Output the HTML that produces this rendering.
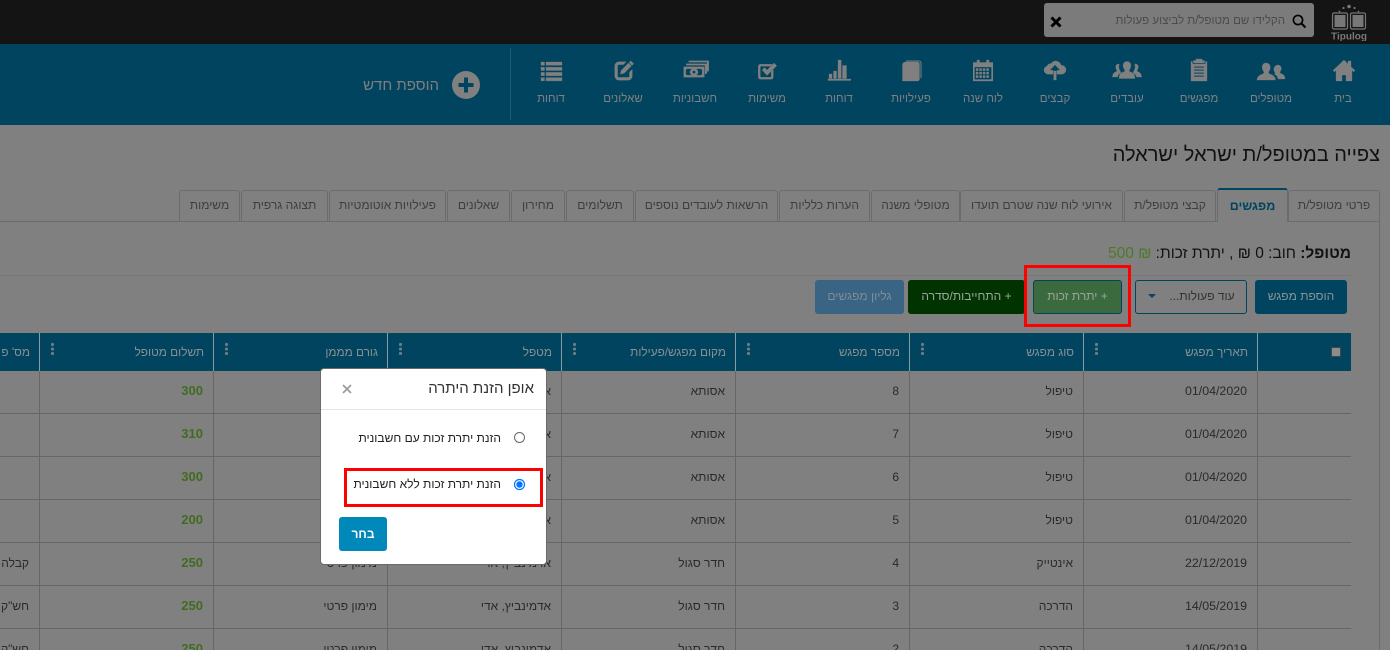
<!DOCTYPE html>
<html lang="he"><head><meta charset="utf-8"><title>Tipulog</title>
<style>
*{box-sizing:border-box}
html,body{margin:0;padding:0;width:1390px;height:650px;overflow:hidden;background:#7f807f;font-family:"Liberation Sans",sans-serif;font-size:12px;color:#2a2a2a}
#w{position:relative;width:1390px;height:650px;overflow:hidden}
.a{position:absolute}
.t{position:absolute;direction:rtl;white-space:nowrap;text-align:right}
.n{position:absolute;top:92px;width:72px;text-align:center;direction:rtl;color:#808080;font-size:11.5px;line-height:15px;white-space:nowrap}
.i{position:absolute;top:58px;fill:#808080;stroke:#808080;stroke-width:.3}
.i.b{stroke-width:.8}
.tab{position:absolute;top:190px;height:32px;border:1px solid #696d70;border-bottom:0;border-radius:3px 3px 0 0;color:#3d3f3f;text-align:center;line-height:29px;direction:rtl;white-space:nowrap;font-size:12px}
.btn{position:absolute;top:280px;height:34px;border-radius:3px;line-height:33px;text-align:center;direction:rtl;font-size:12px;white-space:nowrap}
.hc{position:absolute;top:333px;height:38px;background:#00445f;border-left:1px solid #8b9ba3;color:#8a8f90;direction:rtl;text-align:right;line-height:39px;padding-right:9px;white-space:nowrap;font-size:11.8px}
.dots{position:absolute;top:343px;width:3px;height:13px;background:radial-gradient(circle at 1.5px 1.5px,#6a7c85 1.5px,transparent 1.6px) 0 0/3px 4.5px repeat-y}
.c{position:absolute;height:43px;line-height:41px;direction:rtl;text-align:right;padding-right:10px;border-left:1px solid #666;border-bottom:1px solid #666;white-space:nowrap;overflow:hidden;font-size:12px;color:#2a2a2a}
.d{font-size:12.4px}
.g{color:#426b22;font-weight:bold;font-size:13px;line-height:39px}
</style></head><body><div id="w">

<!-- top bar -->
<div class="a" style="left:0;top:0;width:1390px;height:44px;background:#141414"></div>
<div class="a" style="left:1044px;top:3px;width:270px;height:34px;background:#7b7b7b;border-radius:3px"></div>
<div class="t" style="right:105px;top:13px;font-size:11.5px;color:#4b4b4b;line-height:16px">הקלידו שם מטופל/ת לביצוע פעולות</div>
<svg class="a" style="left:1292px;top:14px" width="15" height="15" viewBox="0 0 15 15"><circle cx="6" cy="6" r="4.6" fill="none" stroke="#000" stroke-width="1.6"/><path d="M9.5 9.5L13.5 13.5" stroke="#000" stroke-width="2"/></svg>
<svg class="a" style="left:1050px;top:16px" width="12" height="12" viewBox="0 0 12 12"><path d="M1.5 1.5L10.5 10.5M10.5 1.5L1.5 10.5" stroke="#000" stroke-width="3"/></svg>
<svg class="a" style="left:1329px;top:3px" width="40" height="38" viewBox="0 0 40 38">
<g fill="none" stroke="#777" stroke-width="1.2"><rect x="3.500" y="10" width="15" height="16" rx="1.5"/><rect x="21.500" y="10" width="15" height="16" rx="1.5"/></g>
<rect x="5.500" y="12" width="11" height="12" fill="#777"/><rect x="23.500" y="12" width="11" height="12" fill="#777"/>
<g fill="#777"><circle cx="20" cy="3.500" r="1.8"/><circle cx="14.500" cy="5" r="1.1"/><circle cx="25.500" cy="5" r="1.1"/><circle cx="10.500" cy="8.500" r=".9"/><circle cx="29.500" cy="8.500" r=".9"/></g>
<text x="20" y="36.500" text-anchor="middle" font-family="Liberation Sans" font-weight="bold" font-size="10" fill="#777">Tipulog</text></svg>

<!-- nav -->
<div class="a" style="left:0;top:44px;width:1390px;height:81px;background:#00445f"></div>
<div class="a" style="left:510px;top:48px;width:1px;height:72px;background:#215a73"></div>

<svg class="i" style="left:1332px" width="24" height="24" viewBox="0 0 24 24"><path d="M12 2L1 12.500l1.400 1.300L4 12.400V23h6v-6h4v6h6V12.400l1.600 1.400 1.400-1.300L19 8.700V3h-3v3z"/></svg>
<svg class="i" style="left:1256px" width="30" height="24" viewBox="0 0 30 24"><path d="M10 5c3.200 0 4.600 2.500 4.200 5.200-.3 1.700-1 3-1.800 3.800 0 1 .5 1.600 2 2.200 2.500 1 4.800 2 5.100 5.800H1c.3-3.800 2.600-4.800 5.100-5.800 1.500-.6 2-1.200 2-2.200-.8-.8-1.500-2.100-1.800-3.800C5.900 7.500 6.800 5 10 5z"/><path d="M22 7c2.400 0 3.500 2 3.200 4-.2 1.400-.8 2.400-1.400 3 0 .8.400 1.200 1.600 1.700 1.900.8 3.500 1.600 3.600 5.300h-7c-.3-2.500-1.600-4-3.800-5 .6-.3 1-.7 1-1.200-.6-.6-1.100-1.600-1.300-2.800C17.600 9 19.600 7 22 7z"/></svg>
<svg class="i" style="left:1189px" width="20" height="24" viewBox="0 0 20 24"><path fill-rule="evenodd" d="M7 2.500V1h6v1.500h2.500V5h-11V2.500zM2 3.500h1.500V6h13V3.500H18V23H2zM5 8.500v1.200h10V8.500zm0 3v1.200h10v-1.200zm0 3v1.200h10v-1.200zm0 3v1.200h10v-1.200z"/></svg>
<svg class="i" style="left:1112px" width="30" height="24" viewBox="0 0 30 24"><path d="M15 3.500c3 0 4.200 2.300 3.800 4.800-.3 1.800-1 3.100-1.700 3.900 0 1 .6 1.500 2 2 2.200.9 3.600 1.800 3.900 6.300H7c.3-4.500 1.700-5.400 3.900-6.300 1.400-.5 2-1 2-2-.7-.8-1.400-2.100-1.700-3.900C10.800 5.800 12 3.500 15 3.500z"/><path d="M6.500 6c-2.100 0-3 1.800-2.700 3.700.2 1.200.7 2.200 1.200 2.700 0 .7-.4 1.100-1.400 1.500C2 14.700.8 15.500.4 19H5.500c.4-2 1.600-3.300 3.700-4.300-.5-.4-.8-.8-.8-1.400-.8-1-1.300-2.300-1.500-3.900-.1-1.200 0-2.300.4-3.300C7.300 6.100 6.900 6 6.500 6zM23.500 6c2.100 0 3 1.800 2.700 3.700-.2 1.200-.7 2.200-1.200 2.700 0 .7.400 1.100 1.400 1.500 1.600.8 2.800 1.600 3.200 5.100h-5.100c-.4-2-1.600-3.300-3.700-4.300.5-.4.800-.8.800-1.400.8-1 1.300-2.300 1.500-3.900.1-1.200 0-2.300-.4-3.300.4 0 .4-.1.800-.1z"/></svg>
<svg class="i" style="left:1043px" width="24" height="24" viewBox="0 0 24 24"><path d="M12.500 3c2.800 0 5 1.800 5.600 4.300C20.900 7.400 23 9.300 23 11.800c0 2.500-2 4.400-4.500 4.400H14v-4h3.200L12 6.800 6.800 12.200H10v4H5.500C3 16.200 1 14.300 1 12c0-2 1.400-3.600 3.200-4 .5-1.800 2.300-2.800 3.900-2.300C9.100 4 10.700 3 12.500 3z"/><rect x="10.700" y="13" width="2.600" height="9"/></svg>
<svg class="i" style="left:973px" width="20" height="24" viewBox="0 0 20 24"><path fill-rule="evenodd" d="M4 2h2.500v2.500h7V2H16v2.500h4V23H0V4.500h4zM1.500 9v12.500h17V9zM3 10.500h2.200v2.200H3zm3.500 0h2.200v2.200H6.500zm3.500 0h2.200v2.200H10zm3.500 0h2.200v2.200h-2.200zM3 14h2.200v2.200H3zm3.500 0h2.200v2.200H6.500zm3.500 0h2.200v2.200H10zm3.500 0h2.200v2.200h-2.200zM3 17.500h2.200v2.200H3zm3.500 0h2.200v2.200H6.500zm3.500 0h2.200v2.200H10zm3.500 0h2.200v2.200h-2.200z"/></svg>
<svg class="i" style="left:901px" width="21" height="24" viewBox="0 0 21 24"><path d="M4.500 4h12a2 2 0 0 1 2 2v15a2 2 0 0 1-2 2H1.500V7c0-1.800 1.200-3 3-3z"/><path d="M5 3h13a2.200 2.200 0 0 1 2 2.200V20" fill="none" stroke-width="1"/></svg>
<svg class="i" style="left:827px" width="24" height="24" viewBox="0 0 24 24"><path d="M1 22.500h23V21H1zM2 16h3v4.500H2zM6.500 13h3v7.500h-3zM11 2h3.200v18.500H11zM15.500 7.500h4v13h-4z"/></svg>
<svg class="i b" style="left:757px" width="22" height="24" viewBox="0 0 22 24"><path d="M14.500 18.500a1 1 0 0 1-1 1H4a1 1 0 0 1-1-1V9a1 1 0 0 1 1-1h9l1.500-1.500H3.500A2 2 0 0 0 1.500 8.500V19a2 2 0 0 0 2 2h10.500a2 2 0 0 0 2-2v-6.500l-1.500 1.500z"/><path d="M5.500 12l2-2 2.500 2.500 7-7 2.300 2.300L10 17z"/></svg>
<svg class="i b" style="left:683px" width="26" height="24" viewBox="0 0 26 24"><path fill-rule="evenodd" d="M1 9h20v10H1zM3.500 10.500A2 2 0 0 1 2.500 12v4.200a2 2 0 0 1 1 1.300h15a2 2 0 0 1 1-1.300V12a2 2 0 0 1-1-1.500zM11 10.800c2.200 0 3.800 1.500 3.800 3.300S13.200 17.300 11 17.300s-3.800-1.400-3.800-3.200 1.600-3.300 3.800-3.300zm0 1.500a1.800 1.800 0 1 0 0 3.600 1.800 1.800 0 0 0 0-3.600z"/><path d="M3.500 7V6h20v9.500h-1.200V7zM6 4V3h19.500v10h-1.200V4z"/></svg>
<svg class="i b" style="left:613px" width="22" height="24" viewBox="0 0 22 24"><path d="M12.500 4H6a4 4 0 0 0-4 4v10a4 4 0 0 0 4 4h9a4 4 0 0 0 4-4v-6l-2.300 2.300V18a1.700 1.700 0 0 1-1.700 1.700H6A1.700 1.700 0 0 1 4.300 18V8A1.700 1.700 0 0 1 6 6.300h4.200z"/><path d="M8.500 12.500l7-7 2.500 2.500-7 7-3.300.8zM16.500 4.500l1.300-1.300 2.500 2.500-1.300 1.300z"/></svg>
<svg class="i" style="left:540px" width="23" height="24" viewBox="0 0 23 24"><path d="M1 4h3.500v3.300H1zM6 4h16v3.300H6zM1 9.200h3.500v3.300H1zM6 9.200h16v3.300H6zM1 14.400h3.500v3.300H1zM6 14.400h16v3.300H6zM1 19.600h3.500v3.300H1zM6 19.600h16v3.300H6z"/></svg>

<div class="n" style="left:1307px">בית</div>
<div class="n" style="left:1235px">מטופלים</div>
<div class="n" style="left:1163px">מפגשים</div>
<div class="n" style="left:1091px">עובדים</div>
<div class="n" style="left:1019px">קבצים</div>
<div class="n" style="left:947px">לוח שנה</div>
<div class="n" style="left:875px">פעילויות</div>
<div class="n" style="left:803px">דוחות</div>
<div class="n" style="left:731px">משימות</div>
<div class="n" style="left:659px">חשבוניות</div>
<div class="n" style="left:587px">שאלונים</div>
<div class="n" style="left:515px">דוחות</div>

<svg class="a" style="left:452px;top:71px" width="28" height="28" viewBox="0 0 28 28"><circle cx="14" cy="14" r="14" fill="#808080"/><path d="M14 6.500v15M6.500 14h15" stroke="#00445f" stroke-width="4"/></svg>
<div class="t" style="right:951px;top:77px;color:#808080;font-size:15px;line-height:18px">הוספת חדש</div>

<!-- title -->
<div class="t" style="right:10px;top:142px;font-size:20px;line-height:26px;color:#111">צפייה במטופל/ת ישראל ישראלה</div>

<!-- tabs -->
<div class="a" style="left:0;top:221px;width:1380px;height:1px;background:#696d70"></div>
<div class="a" style="left:1379px;top:221px;width:1px;height:429px;background:#696d70"></div>
<div class="tab" style="left:1288px;width:92px">פרטי מטופל/ת</div>
<div class="tab" style="left:1217px;width:71px;top:188px;height:34px;line-height:33px;border-top:2px solid #00445f;font-weight:bold;font-size:12.5px;color:#00445f;background:#7f807f">מפגשים</div>
<div class="tab" style="left:1124px;width:92px">קבצי מטופל/ת</div>
<div class="tab" style="left:960px;width:163px">אירועי לוח שנה שטרם תועדו</div>
<div class="tab" style="left:871px;width:89px">מטופלי משנה</div>
<div class="tab" style="left:779px;width:91px">הערות כלליות</div>
<div class="tab" style="left:635px;width:143px">הרשאות לעובדים נוספים</div>
<div class="tab" style="left:566px;width:68px">תשלומים</div>
<div class="tab" style="left:511px;width:54px">מחירון</div>
<div class="tab" style="left:447px;width:63px">שאלונים</div>
<div class="tab" style="left:329px;width:117px">פעילויות אוטומטיות</div>
<div class="tab" style="left:241px;width:87px">תצוגה גרפית</div>
<div class="tab" style="left:179px;width:61px">משימות</div>

<!-- summary -->
<div class="t" style="right:39px;top:244px;font-size:15.5px;line-height:20px;color:#111"><b>מטופל:</b> חוב: 0 ₪ , יתרת זכות: <span style="color:#4d7a27">₪ 500</span></div>
<div class="a" style="left:0;top:275px;width:1351px;height:1px;background:#767776"></div>

<!-- buttons -->
<div class="btn" style="left:1255px;width:92px;background:#00445f;color:#8a9296">הוספת מפגש</div>
<div class="btn" style="left:1135px;width:112px;border:1px solid #00445f;color:#2f3436;line-height:31px;padding-left:22px">עוד פעולות...</div>
<div class="a" style="left:1148px;top:294px;width:0;height:0;border:4px solid transparent;border-top:4px solid #00445f"></div>
<div class="btn" style="left:1033px;width:89px;background:#3a6a3d;border:1px solid #00445f;color:#9aa69a;line-height:31px">+ יתרת זכות</div>
<div class="btn" style="left:908px;width:117px;background:#003300;color:#9aa69a">+ התחייבות/סדרה</div>
<div class="btn" style="left:815px;width:89px;background:#3a6483;color:#808c96">גליון מפגשים</div>
<div class="a" style="left:1024px;top:265px;width:107px;height:62px;border:3px solid #f00"></div>

<!-- table header -->
<div class="hc" style="left:1257px;width:94px;padding:0"></div>
<div class="a" style="left:1331px;top:347px;width:10px;height:10px;background:#8c8c8c;border:1px solid #444"></div>
<div class="hc" style="left:1083px;width:174px">תאריך מפגש</div>
<div class="hc" style="left:909px;width:174px">סוג מפגש</div>
<div class="hc" style="left:735px;width:174px">מספר מפגש</div>
<div class="hc" style="left:561px;width:174px">מקום מפגש/פעילות</div>
<div class="hc" style="left:387px;width:174px">מטפל</div>
<div class="hc" style="left:213px;width:174px">גורם מממן</div>
<div class="hc" style="left:39px;width:174px">תשלום מטופל</div>
<div class="hc" style="left:-30px;width:69px">מס' פ</div>
<div class="dots" style="left:1095px"></div><div class="dots" style="left:921px"></div><div class="dots" style="left:747px"></div><div class="dots" style="left:573px"></div><div class="dots" style="left:399px"></div><div class="dots" style="left:225px"></div><div class="dots" style="left:51px"></div>

<!-- rows -->
<div class="c" style="left:1257px;top:371px;width:94px"></div><div class="c d" style="left:1083px;top:371px;width:174px">01/04/2020</div><div class="c" style="left:909px;top:371px;width:174px">טיפול</div><div class="c" style="left:735px;top:371px;width:174px">8</div><div class="c" style="left:561px;top:371px;width:174px">אסותא</div><div class="c" style="left:387px;top:371px;width:174px">אדמינביץ, אדי</div><div class="c" style="left:213px;top:371px;width:174px"></div><div class="c g" style="left:39px;top:371px;width:174px">300</div><div class="c" style="left:-30px;top:371px;width:69px"></div>
<div class="c" style="left:1257px;top:414px;width:94px"></div><div class="c d" style="left:1083px;top:414px;width:174px">01/04/2020</div><div class="c" style="left:909px;top:414px;width:174px">טיפול</div><div class="c" style="left:735px;top:414px;width:174px">7</div><div class="c" style="left:561px;top:414px;width:174px">אסותא</div><div class="c" style="left:387px;top:414px;width:174px">אדמינביץ, אדי</div><div class="c" style="left:213px;top:414px;width:174px"></div><div class="c g" style="left:39px;top:414px;width:174px">310</div><div class="c" style="left:-30px;top:414px;width:69px"></div>
<div class="c" style="left:1257px;top:457px;width:94px"></div><div class="c d" style="left:1083px;top:457px;width:174px">01/04/2020</div><div class="c" style="left:909px;top:457px;width:174px">טיפול</div><div class="c" style="left:735px;top:457px;width:174px">6</div><div class="c" style="left:561px;top:457px;width:174px">אסותא</div><div class="c" style="left:387px;top:457px;width:174px">אדמינביץ, אדי</div><div class="c" style="left:213px;top:457px;width:174px"></div><div class="c g" style="left:39px;top:457px;width:174px">300</div><div class="c" style="left:-30px;top:457px;width:69px"></div>
<div class="c" style="left:1257px;top:500px;width:94px"></div><div class="c d" style="left:1083px;top:500px;width:174px">01/04/2020</div><div class="c" style="left:909px;top:500px;width:174px">טיפול</div><div class="c" style="left:735px;top:500px;width:174px">5</div><div class="c" style="left:561px;top:500px;width:174px">אסותא</div><div class="c" style="left:387px;top:500px;width:174px">אדמינביץ, אדי</div><div class="c" style="left:213px;top:500px;width:174px"></div><div class="c g" style="left:39px;top:500px;width:174px">200</div><div class="c" style="left:-30px;top:500px;width:69px"></div>
<div class="c" style="left:1257px;top:543px;width:94px"></div><div class="c d" style="left:1083px;top:543px;width:174px">22/12/2019</div><div class="c" style="left:909px;top:543px;width:174px">אינטייק</div><div class="c" style="left:735px;top:543px;width:174px">4</div><div class="c" style="left:561px;top:543px;width:174px">חדר סגול</div><div class="c" style="left:387px;top:543px;width:174px">אדמינביץ, אדי</div><div class="c" style="left:213px;top:543px;width:174px">מימון פרטי</div><div class="c g" style="left:39px;top:543px;width:174px">250</div><div class="c" style="left:-30px;top:543px;width:69px">קבלה</div>
<div class="c" style="left:1257px;top:586px;width:94px"></div><div class="c d" style="left:1083px;top:586px;width:174px">14/05/2019</div><div class="c" style="left:909px;top:586px;width:174px">הדרכה</div><div class="c" style="left:735px;top:586px;width:174px">3</div><div class="c" style="left:561px;top:586px;width:174px">חדר סגול</div><div class="c" style="left:387px;top:586px;width:174px">אדמינביץ, אדי</div><div class="c" style="left:213px;top:586px;width:174px">מימון פרטי</div><div class="c g" style="left:39px;top:586px;width:174px">250</div><div class="c" style="left:-30px;top:586px;width:69px">חש"ק</div>
<div class="c" style="left:1257px;top:629px;width:94px"></div><div class="c d" style="left:1083px;top:629px;width:174px">14/05/2019</div><div class="c" style="left:909px;top:629px;width:174px">הדרכה</div><div class="c" style="left:735px;top:629px;width:174px">2</div><div class="c" style="left:561px;top:629px;width:174px">חדר סגול</div><div class="c" style="left:387px;top:629px;width:174px">אדמינביץ, אדי</div><div class="c" style="left:213px;top:629px;width:174px">מימון פרטי</div><div class="c g" style="left:39px;top:629px;width:174px">250</div><div class="c" style="left:-30px;top:629px;width:69px">חש"ק</div>

<!-- modal -->
<div class="a" style="left:320px;top:368px;width:227px;height:197px;background:#fff;border-radius:4px;border:1px solid #6a6a6a"></div>
<div class="a" style="left:321px;top:409px;width:225px;height:1px;background:#e4e4e4"></div>
<div class="t" style="right:856px;top:380px;font-size:15px;line-height:18px;color:#333">אופן הזנת היתרה</div>
<svg class="a" style="left:342px;top:384px" width="10" height="10" viewBox="0 0 10 10"><path d="M1 1L9 9M9 1L1 9" stroke="#9a9a9a" stroke-width="1.6"/></svg>
<svg class="a" style="left:513px;top:431px" width="13" height="13" viewBox="0 0 13 13"><circle cx="6.500" cy="6.500" r="5" fill="#fff" stroke="#666" stroke-width="1"/></svg>
<div class="t" style="right:889px;top:431px;font-size:12px;line-height:15px;color:#222">הזנת יתרת זכות עם חשבונית</div>
<div class="a" style="left:344px;top:468px;width:199px;height:39px;border:3px solid #f00"></div>
<svg class="a" style="left:513px;top:478px" width="13" height="13" viewBox="0 0 13 13"><circle cx="6.500" cy="6.500" r="5" fill="#fff" stroke="#0075ff" stroke-width="1.200"/><circle cx="6.500" cy="6.500" r="3.200" fill="#0075ff"/></svg>
<div class="t" style="right:889px;top:477px;font-size:12px;line-height:15px;color:#222">הזנת יתרת זכות ללא חשבונית</div>
<div class="a" style="left:339px;top:517px;width:48px;height:34px;background:#0088bb;border-radius:3px;color:#fff;font-weight:bold;text-align:center;line-height:34px;direction:rtl">בחר</div>

</div></body></html>
